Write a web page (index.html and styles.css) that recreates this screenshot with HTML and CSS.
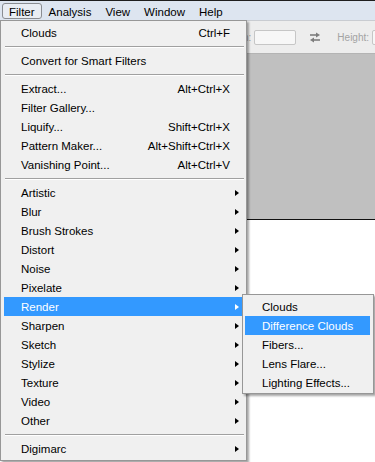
FILE: index.html
```html
<!DOCTYPE html>
<html lang="en">
<head>
    <meta charset="UTF-8">
    <meta name="viewport" content="width=device-width, initial-scale=1.0">
    <title>Filter Menu</title>
    <link rel="stylesheet" href="styles.css">
</head>
<body>
    <div class="screen">
        <div class="menubar">
            <span class="menubar-item open">Filter</span>
            <span class="menubar-item">Analysis</span>
            <span class="menubar-item">View</span>
            <span class="menubar-item">Window</span>
            <span class="menubar-item">Help</span>
        </div>

        <div class="toolbar">
            <span class="tool-label">Width:</span>
            <span class="tool-field"></span>
            <svg class="swap" width="12" height="11" viewBox="0 0 12 11">
                <path d="M1 3h7" stroke="#7d7d7d" stroke-width="1.6"/>
                <path d="M7 0.5l4 2.5-4 2.5z" fill="#7d7d7d"/>
                <path d="M4 8h7" stroke="#7d7d7d" stroke-width="1.6"/>
                <path d="M5 5.5l-4 2.5 4 2.5z" fill="#7d7d7d"/>
            </svg>
            <span class="tool-label height-label">Height:</span>
            <span class="tool-field"></span>
        </div>
        <div class="canvas"></div>
        <div class="workspace"></div>

        <!-- Filter drop-down -->
        <div class="menu main-menu">
            <div class="menu-item"><span class="label">Clouds</span><span class="shortcut">Ctrl+F</span><span class="arrow-col"></span></div>
            <div class="separator"></div>
            <div class="menu-item"><span class="label">Convert for Smart Filters</span><span class="arrow-col"></span></div>
            <div class="separator"></div>
            <div class="menu-item"><span class="label">Extract...</span><span class="shortcut">Alt+Ctrl+X</span><span class="arrow-col"></span></div>
            <div class="menu-item"><span class="label">Filter Gallery...</span><span class="arrow-col"></span></div>
            <div class="menu-item"><span class="label">Liquify...</span><span class="shortcut">Shift+Ctrl+X</span><span class="arrow-col"></span></div>
            <div class="menu-item"><span class="label">Pattern Maker...</span><span class="shortcut">Alt+Shift+Ctrl+X</span><span class="arrow-col"></span></div>
            <div class="menu-item"><span class="label">Vanishing Point...</span><span class="shortcut">Alt+Ctrl+V</span><span class="arrow-col"></span></div>
            <div class="separator"></div>
            <div class="menu-item"><span class="label">Artistic</span><span class="arrow-col"><i class="arrow"></i></span></div>
            <div class="menu-item"><span class="label">Blur</span><span class="arrow-col"><i class="arrow"></i></span></div>
            <div class="menu-item"><span class="label">Brush Strokes</span><span class="arrow-col"><i class="arrow"></i></span></div>
            <div class="menu-item"><span class="label">Distort</span><span class="arrow-col"><i class="arrow"></i></span></div>
            <div class="menu-item"><span class="label">Noise</span><span class="arrow-col"><i class="arrow"></i></span></div>
            <div class="menu-item"><span class="label">Pixelate</span><span class="arrow-col"><i class="arrow"></i></span></div>
            <div class="menu-item active"><span class="label">Render</span><span class="arrow-col"><i class="arrow"></i></span></div>
            <div class="menu-item"><span class="label">Sharpen</span><span class="arrow-col"><i class="arrow"></i></span></div>
            <div class="menu-item"><span class="label">Sketch</span><span class="arrow-col"><i class="arrow"></i></span></div>
            <div class="menu-item"><span class="label">Stylize</span><span class="arrow-col"><i class="arrow"></i></span></div>
            <div class="menu-item"><span class="label">Texture</span><span class="arrow-col"><i class="arrow"></i></span></div>
            <div class="menu-item"><span class="label">Video</span><span class="arrow-col"><i class="arrow"></i></span></div>
            <div class="menu-item"><span class="label">Other</span><span class="arrow-col"><i class="arrow"></i></span></div>
            <div class="separator"></div>
            <div class="menu-item"><span class="label">Digimarc</span><span class="arrow-col"><i class="arrow"></i></span></div>
        </div>

        <!-- Render submenu -->
        <div class="menu sub-menu">
            <div class="menu-item"><span class="label">Clouds</span></div>
            <div class="menu-item active"><span class="label">Difference Clouds</span></div>
            <div class="menu-item"><span class="label">Fibers...</span></div>
            <div class="menu-item"><span class="label">Lens Flare...</span></div>
            <div class="menu-item"><span class="label">Lighting Effects...</span></div>
        </div>
    </div>
</body>
</html>
```

FILE: styles.css
```css
body {
    margin: 0;
    padding: 0;
    font-family: "Liberation Sans", Arial, sans-serif;
    font-size: 11.5px;
    color: #000;
}
.screen {
    position: relative;
    width: 375px;
    height: 462px;
    overflow: hidden;
    background: #fff;
}
.menubar {
    display: flex;
    height: 19px;
    padding-left: 2px;
    border-top: 1px solid #1e1e1e;
    background: #dde5f0;
}
.menubar-item {
    height: 16px;
    margin-top: 2px;
    padding: 0 6px;
    line-height: 16px;
    border: 1px solid transparent;
    border-radius: 3px;
    box-sizing: border-box;
}
.menubar-item.open {
    border-color: #8a8d92;
    background: #e9edf3;
}
.toolbar {
    display: flex;
    align-items: center;
    height: 34px;
    padding-left: 223px;
    background: #ededed;
    border-top: 1px solid #c9ccd1;
    border-bottom: 1px solid #b4b4b4;
    box-sizing: border-box;
}
.tool-label {
    font-size: 10px;
    color: #a3a3a3;
}
.tool-field {
    width: 42px;
    height: 15px;
    margin-left: 3px;
    border: 1px solid #c6c6c6;
    border-radius: 2px;
    background: #f7f7f7;
    box-sizing: border-box;
    flex-shrink: 0;
}
.swap {
    margin-left: 13px;
    flex-shrink: 0;
}
.height-label {
    margin-left: 16px;
}
.canvas {
    height: 165px;
    background: #c0c0c0;
    border-bottom: 1px solid #111;
}
.workspace {
    height: 240px;
    background: #fff;
}

/* menus */
.menu {
    position: absolute;
    background: #f0f0f0;
    border: 1px solid #979797;
    box-sizing: border-box;
    box-shadow: 2px 2px 2px rgba(0, 0, 0, 0.35);
}
.main-menu {
    top: 20px;
    left: 0;
    width: 247px;
    padding: 2px 2px 2px 3px;
}
.sub-menu {
    top: 294px;
    left: 242px;
    width: 132px;
    padding: 2px 3px 1px 2px;
}
.menu-item {
    display: flex;
    height: 17px;
    line-height: 17px;
    padding: 2px 0 0 17px;
    white-space: nowrap;
}
.menu-item .label {
    flex: 1;
}
.menu-item.active {
    background: #3399ff;
    color: #fff;
}
.shortcut {
    text-align: right;
}
.arrow-col {
    display: flex;
    align-items: center;
    width: 14px;
    height: 19px;
    margin-top: -2px;
    padding-left: 5px;
    box-sizing: border-box;
    flex-shrink: 0;
}
.arrow {
    width: 0;
    height: 0;
    border-left: 4px solid #000;
    border-top: 3.5px solid transparent;
    border-bottom: 3.5px solid transparent;
}
.menu-item.active .arrow {
    border-left-color: #fff;
}
.separator {
    height: 1px;
    margin: 4px 0 3px 1px;
    background: #a0a0a0;
    border-bottom: 1px solid #fff;
}
```
